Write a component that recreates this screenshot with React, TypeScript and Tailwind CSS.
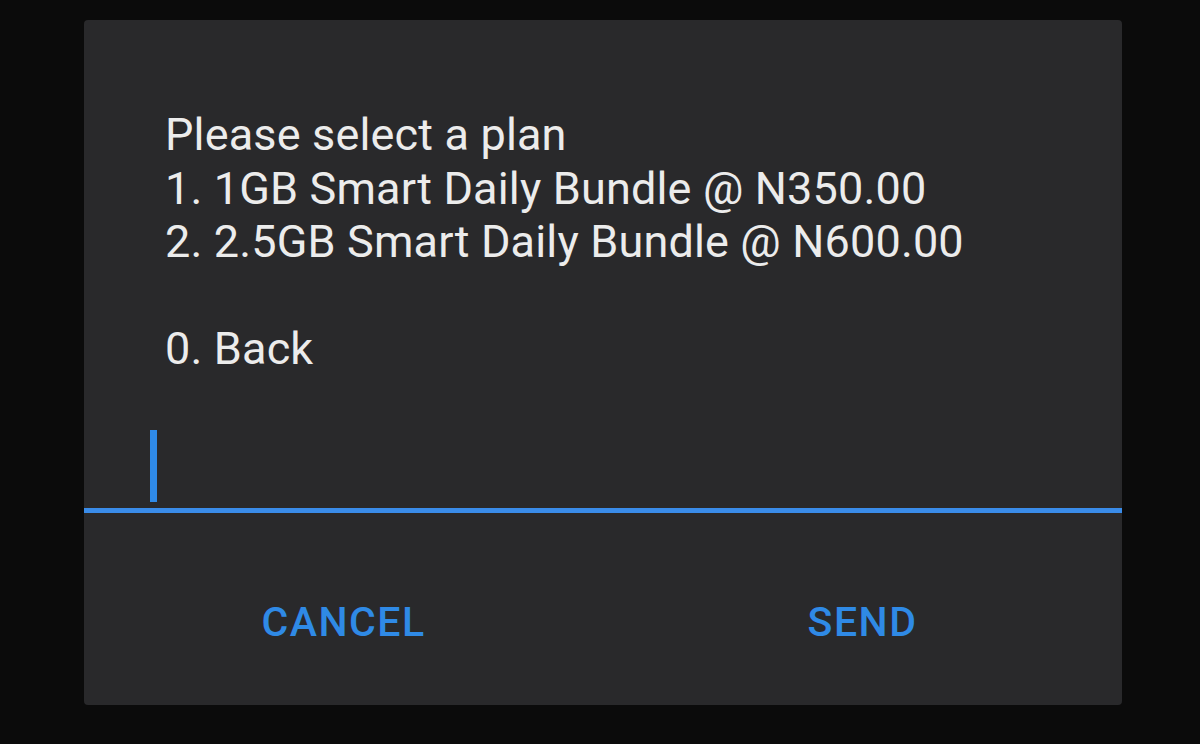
export default function App() {
  const lines = [
    "Please select a plan",
    "1. 1GB Smart Daily Bundle @ N350.00",
    "2. 2.5GB Smart Daily Bundle @ N600.00",
    "",
    "0. Back",
  ];

  return (
    <div className="h-[744px] w-[1200px] overflow-hidden bg-[#0b0b0b] pl-[84px] pt-[20px] font-['Roboto',sans-serif]">
      <div className="flex h-[685px] w-[1038px] flex-col rounded-[4px] bg-[#29292b]">
        <div className="px-[81px] pt-[88px] text-[45px] leading-[53.5px] tracking-[0.16px] text-[#ececec]">
          {lines.map((line, i) => (
            <div key={i} className="h-[53.5px] whitespace-pre">
              {line}
            </div>
          ))}
        </div>

        <div className="mt-[54px] pl-[66px]">
          <div className="h-[72px] w-[7px] bg-[#2f8ae8]" />
        </div>
        <div className="mt-[6px] h-[5px] w-full bg-[#3a8ce9]" />

        <div className="mt-[60px] flex h-[100px]">
          <button className="flex flex-1 items-center justify-center text-[41px] font-medium tracking-[1.5px] text-[#2f8ae6]">
            CANCEL
          </button>
          <button className="flex flex-1 items-center justify-center text-[41px] font-medium tracking-[1.5px] text-[#2f8ae6]">
            SEND
          </button>
        </div>
      </div>
    </div>
  );
}
